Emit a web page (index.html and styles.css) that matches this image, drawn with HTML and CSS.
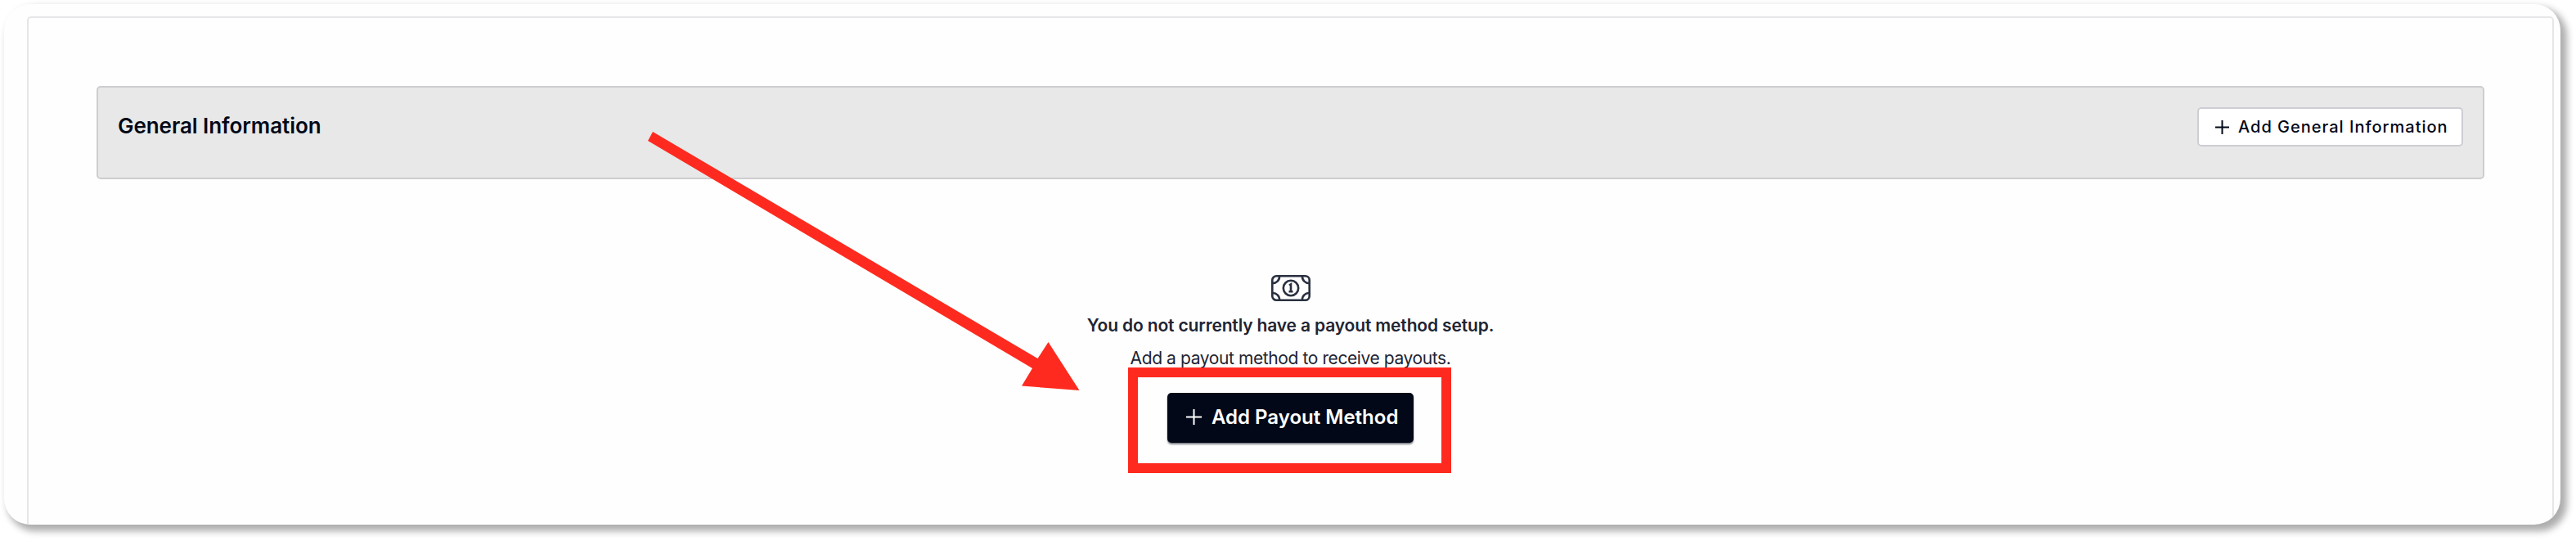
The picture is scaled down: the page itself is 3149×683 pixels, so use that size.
FILE: index.html
```html
<!DOCTYPE html>
<html lang="en">
<head>
<meta charset="UTF-8">
<meta name="viewport" content="width=device-width, initial-scale=1.0">
<title>Payout Settings</title>
<link rel="stylesheet" href="styles.css">
</head>
<body>
<div class="window">
    <div class="panel">
        <div class="section-header">
            <h2>General Information</h2>
            <button class="btn btn-light">
                <svg class="plus" width="17" height="17" viewBox="0 0 17 17"><path d="M8.5 0v17M0 8.5h17"/></svg>
                <span>Add General Information</span>
            </button>
        </div>

        <div class="empty-state">
            <svg class="cash" width="48" height="32" viewBox="0 0 48 32">
                <rect x="1.3" y="1.3" width="45.4" height="29.4" rx="5"/>
                <path d="M10 1.300a8 8 0 0 1-8.700 8.700M38 1.300a8 8 0 0 0 8.700 8.700M10 30.700a8 8 0 0 0-8.700-8.700M38 30.700a8 8 0 0 1 8.700-8.700"/>
                <circle cx="24" cy="16" r="9.200"/>
                <path d="M22 12.500l2-1.200v8.700M21.500 20.300h5"/>
            </svg>
            <h3>You do not currently have a payout method setup.</h3>
            <p>Add a payout method to receive payouts.</p>
            <button class="btn btn-dark">
                <svg class="plus" width="19" height="19" viewBox="0 0 19 19"><path d="M9.500 0v19M0 9.500h19"/></svg>
                <span>Add Payout Method</span>
                <i class="highlight"></i>
            </button>
        </div>
    </div>
</div>

<svg class="arrow" width="540" height="330" viewBox="0 0 540 330">
    <path d="M13 11L483.500 288l13-20 38 59-70.500-5.500L477 300 7 22z"/>
</svg>
</body>
</html>
```

FILE: styles.css
```css
* {
    box-sizing: border-box;
}
body {
    margin: 0;
    padding: 5px;
    height: 683px;
    background: #fff;
    font-family: Inter, "Liberation Sans", sans-serif;
    color: #020817;
    overflow: hidden;
}
.window {
    width: 3125px;
    height: 636px;
    padding: 15px 8px 0 28px;
    background: #fefefe;
    border-radius: 32px;
    overflow: hidden;
    box-shadow: 6px 6px 9px 2px rgba(0,0,0,0.32);
}
.panel {
    height: 640px;
    padding: 83px 83px 0;
    border: 2px solid #e6e6e8;
    border-radius: 5px;
}
.section-header {
    display: flex;
    justify-content: space-between;
    align-items: flex-start;
    height: 114px;
    padding: 24px;
    background: #e8e8e8;
    border: 2px solid #cdcdd1;
    border-radius: 5px;
}
h2, h3, p {
    margin: 0;
    white-space: nowrap;
}
h2 {
    font-size: 26px;
    font-weight: 600;
    line-height: 46px;
    letter-spacing: -0.05px;
}
.btn {
    display: flex;
    align-items: center;
    font-family: inherit;
    white-space: nowrap;
}
.plus {
    fill: none;
    stroke: currentColor;
    stroke-width: 2;
}
.btn-light {
    width: 325px;
    height: 48px;
    padding: 0 0 0 20px;
    gap: 11px;
    background: #fff;
    border: 2px solid #cdcdd4;
    border-radius: 5px;
    color: #020817;
    font-size: 20px;
    font-weight: 500;
    letter-spacing: 1px;
}
.empty-state {
    display: flex;
    flex-direction: column;
    align-items: center;
    padding-top: 117px;
    color: #1f2433;
}
.cash {
    fill: none;
    stroke: #2a3040;
    stroke-width: 2.6;
}
h3 {
    margin-top: 10px;
    font-size: 21px;
    font-weight: 600;
    line-height: 40px;
    letter-spacing: -0.15px;
}
p {
    font-size: 21px;
    line-height: 40px;
    letter-spacing: -0.4px;
}
.btn-dark {
    position: relative;
    width: 301px;
    height: 61px;
    margin-top: 22px;
    padding: 0 0 3px 23px;
    gap: 12px;
    background: #020817;
    border: none;
    border-radius: 5px;
    box-shadow: 0 2px 2px rgba(2,8,23,0.5);
    color: #fff;
    font-size: 24px;
    font-weight: 600;
}
/* red frame around the button */
.highlight {
    position: absolute;
    top: -31px;
    left: -48px;
    width: 395px;
    height: 129px;
    border: 12.5px solid #ff2a1f;
}
.arrow {
    position: absolute;
    top: 150px;
    left: 785px;
    fill: #ff2a1f;
}
```
